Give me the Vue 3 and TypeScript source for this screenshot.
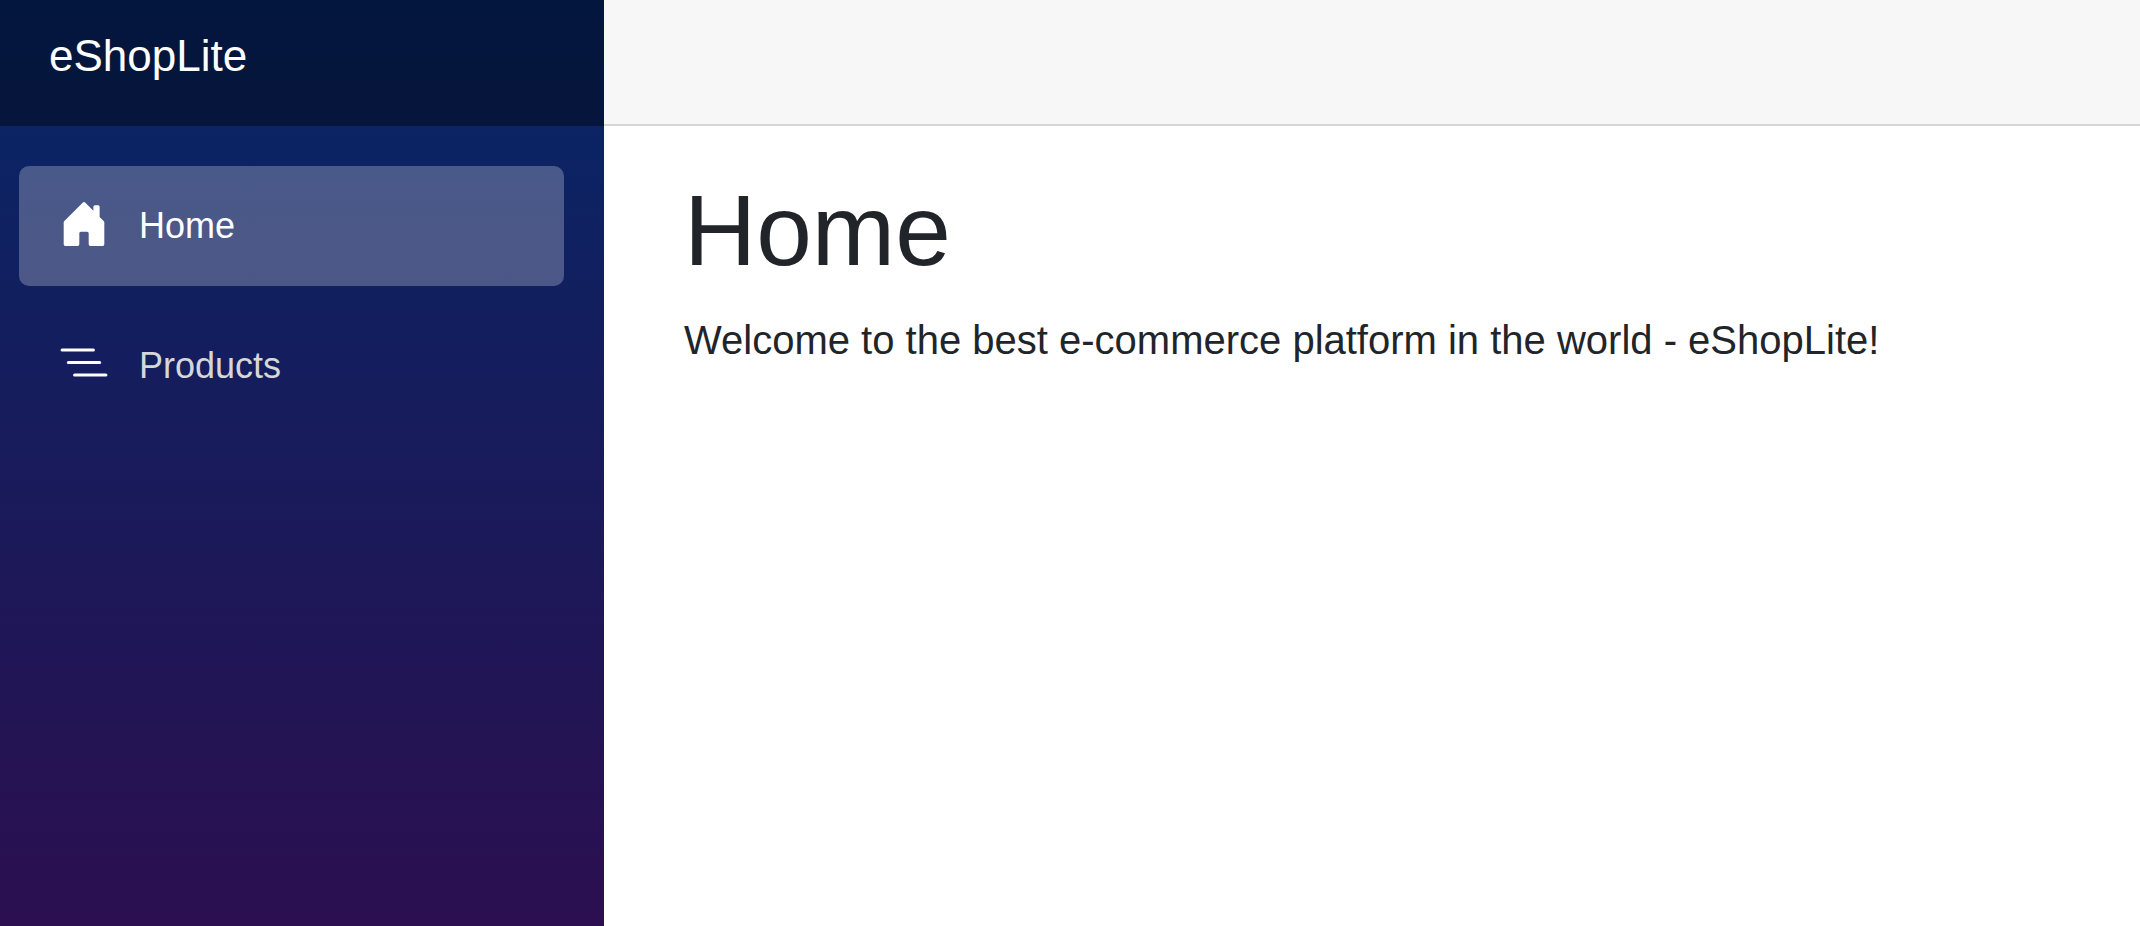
<script setup lang="ts">
import { ref } from 'vue'

interface NavEntry {
  id: string
  label: string
  icon: string
}

const entries: NavEntry[] = [
  {
    id: 'home',
    label: 'Home',
    icon: 'M6.5 14.5v-3.505c0-.245.25-.495.5-.495h2c.25 0 .5.25.5.5v3.5a.5.5 0 0 0 .5.5h4a.5.5 0 0 0 .5-.5v-7a.5.5 0 0 0-.146-.354L13 5.793V2.5a.5.5 0 0 0-.5-.5h-1a.5.5 0 0 0-.5.5v1.293L8.354 1.146a.5.5 0 0 0-.708 0l-6 6A.5.5 0 0 0 1.5 7.5v7a.5.5 0 0 0 .5.5h4a.5.5 0 0 0 .5-.5Z',
  },
  {
    id: 'products',
    label: 'Products',
    icon: 'M4.5 11.5A.5.5 0 0 1 5 11h10a.5.5 0 0 1 0 1H5a.5.5 0 0 1-.5-.5zm-2-4A.5.5 0 0 1 3 7h10a.5.5 0 0 1 0 1H3a.5.5 0 0 1-.5-.5zm-2-4A.5.5 0 0 1 1 3h10a.5.5 0 0 1 0 1H1a.5.5 0 0 1-.5-.5z',
  },
]

const current = ref('home')
</script>

<template>
  <div class="page">
    <aside class="sidebar">
      <div class="brand-row">
        <a class="brand" href="#">eShopLite</a>
      </div>
      <nav class="nav" aria-label="Main">
        <a
          v-for="entry in entries"
          :key="entry.id"
          class="nav-link"
          :class="{ active: entry.id === current }"
          :href="'#' + entry.id"
          :aria-current="entry.id === current ? 'page' : undefined"
          @click="current = entry.id"
        >
          <svg class="nav-icon" viewBox="0 0 16 16" aria-hidden="true">
            <path :d="entry.icon" />
          </svg>
          <span>{{ entry.label }}</span>
        </a>
      </nav>
    </aside>
    <main class="main">
      <header class="top-row"></header>
      <article class="content">
        <h1>Home</h1>
        <p>Welcome to the best e-commerce platform in the world - eShopLite!</p>
      </article>
    </main>
  </div>
</template>

<style>
body {
  margin: 0;
  background: #fff;
}
</style>

<style scoped>
.page {
  display: flex;
  min-height: 100vh;
  font-family: "Liberation Sans", Arial, sans-serif;
  font-size: 40px;
  line-height: 60px;
  color: #212529;
}

.sidebar {
  flex: 0 0 604px;
  background: linear-gradient(180deg, rgb(5, 39, 103) -14px, #3a0647 1280px);
}

.brand-row {
  box-sizing: border-box;
  display: flex;
  align-items: center;
  height: 126px;
  padding: 0 40px 14px 49px;
  background: rgba(0, 0, 0, 0.4);
}

.brand {
  font-size: 44px;
  color: #fff;
  text-decoration: none;
}

.nav {
  display: flex;
  flex-direction: column;
  gap: 20px;
  padding: 40px 40px 40px 19px;
}

.nav-link {
  display: flex;
  align-items: center;
  gap: 30px;
  height: 120px;
  padding: 0 40px;
  box-sizing: border-box;
  border-radius: 10px;
  font-size: 36px;
  color: #d7d7d7;
  text-decoration: none;
}

.nav-link.active {
  background: rgba(255, 255, 255, 0.25);
  color: #fff;
}

.nav-link:not(.active):hover {
  background: rgba(255, 255, 255, 0.1);
  color: #fff;
}

.nav-icon {
  width: 50px;
  height: 50px;
  margin-bottom: 4px;
  fill: #fff;
}

.main {
  flex: 1;
  min-width: 0;
}

.top-row {
  box-sizing: border-box;
  height: 126px;
  background: #f7f7f7;
  border-bottom: 2px solid #d6d5d5;
}

.content {
  padding: 44px 60px 44px 80px;
}

h1 {
  margin: 0 0 20px;
  font-size: 100px;
  font-weight: 400;
  line-height: 120px;
}

p {
  margin: 0;
}
</style>
